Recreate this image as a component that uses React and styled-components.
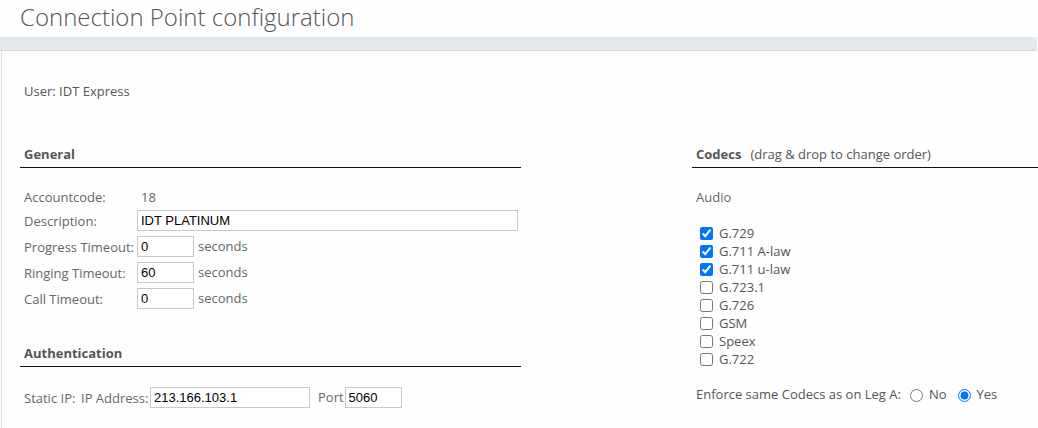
import React from 'react'
import styled, { createGlobalStyle } from 'styled-components';

const GlobalStyle = createGlobalStyle`
    html, body {
        margin: 0;
        padding: 0;
        background: #fefefe;
    }
    body {
        font-family: 'Open Sans', 'Liberation Sans', sans-serif;
        font-size: 13px;
        color: #666;
    }
`;

const Page = styled.div`
    width: 1038px;
    height: 428px;
    overflow: hidden;
    background: #fefefe;
`;

const Title = styled.h1`
    margin: 0;
    height: 37px;
    padding-left: 20px;
    font-size: 24px;
    font-weight: 300;
    line-height: 33px;
    color: #555;
`;

const Band = styled.div`
    height: 13px;
    width: 1037px;
    background: #e4e8eb;
    border-bottom: 1px solid #d6dadd;
`;

const Panel = styled.div`
    margin-left: 1px;
    border-left: 1px solid #dfe2e5;
    padding: 31px 0 0 18px;
    height: 400px;
`;

const UserLine = styled.div`
    padding-left: 4px;
    line-height: 18px;
    color: #555;
`;

const Columns = styled.div`
    display: flex;
    margin-top: 45px;
`;

const LeftCol = styled.div`
    width: 501px;
    flex-shrink: 0;
`;

const RightCol = styled.div`
    margin-left: 171px;
    flex: 1;
`;

const SectionHead = styled.div`
    padding: 0 0 4px 4px;
    line-height: 18px;
    border-bottom: 1px solid #111;
    color: #555;
    b {
        font-weight: 700;
    }
    span {
        margin-left: 9px;
    }
`;

const Spacer = styled.div`
    height: ${props => props.h}px;
`;

const Form = styled.div`
    display: flex;
    flex-direction: column;
    gap: 5px;
    padding-left: 4px;
    margin-top: ${props => props.top}px;
`;

const Row = styled.div`
    display: flex;
    align-items: center;
    height: ${props => props.h || 21}px;
    line-height: 16px;
`;

const Label = styled.div`
    width: ${props => props.w || 113}px;
    flex-shrink: 0;
    white-space: nowrap;
`;

const Value = styled.div`
    padding-left: 4px;
`;

const Input = styled.input`
    box-sizing: border-box;
    height: 21px;
    width: ${props => props.w}px;
    flex-shrink: 0;
    border: 1px solid #c9c9c9;
    padding: 0 3px;
    margin: 0;
    font-family: 'Liberation Sans', Arial, sans-serif;
    font-size: 13px;
    color: #000;
    background: #fff;
    outline: none;
`;

const Unit = styled.span`
    margin-left: ${props => props.ml ?? 4}px;
    margin-right: ${props => props.mr ?? 0}px;
    position: relative;
    top: -1px;
`;

const Audio = styled.div`
    padding-left: 4px;
    margin-top: 20px;
    line-height: 18px;
`;

const CodecList = styled.div`
    margin-top: 18px;
    padding-left: 4px;
    display: flex;
    flex-direction: column;
`;

const Codec = styled.label`
    display: flex;
    align-items: center;
    height: 18px;
    color: #555;
    input {
        width: 13px;
        height: 13px;
        margin: 0 6px 0 4px;
    }
`;

const Enforce = styled.div`
    display: flex;
    align-items: center;
    margin-top: 17px;
    padding-left: 4px;
    height: 18px;
    color: #555;
`;

const Radio = styled.input`
    width: 13px;
    height: 13px;
    margin: 2px 6px 0 ${props => props.ml}px;
`;

const codecs = [
    ['G.729', true],
    ['G.711 A-law', true],
    ['G.711 u-law', true],
    ['G.723.1', false],
    ['G.726', false],
    ['GSM', false],
    ['Speex', false],
    ['G.722', false],
];

export default function App() {
    return (
        <Page>
            <GlobalStyle />
            <Title>Connection Point configuration</Title>
            <Band />
            <Panel>
                <UserLine>User: IDT Express</UserLine>
                <Columns>
                    <LeftCol>
                        <SectionHead><b>General</b></SectionHead>
                        <Form top={21}>
                            <Row h={16}>
                                <Label>Accountcode:</Label>
                                <Value>18</Value>
                            </Row>
                            <Row>
                                <Label>Description:</Label>
                                <Input w={381} defaultValue="IDT PLATINUM" />
                            </Row>
                            <Row>
                                <Label>Progress Timeout:</Label>
                                <Input w={57} defaultValue="0" />
                                <Unit>seconds</Unit>
                            </Row>
                            <Row>
                                <Label>Ringing Timeout:</Label>
                                <Input w={57} defaultValue="60" />
                                <Unit>seconds</Unit>
                            </Row>
                            <Row>
                                <Label>Call Timeout:</Label>
                                <Input w={57} defaultValue="0" />
                                <Unit>seconds</Unit>
                            </Row>
                        </Form>
                        <Spacer h={35} />
                        <SectionHead><b>Authentication</b></SectionHead>
                        <Form top={20}>
                            <Row>
                                <Label w={57}>Static IP:</Label>
                                <Label w={69}>IP Address:</Label>
                                <Input w={160} defaultValue="213.166.103.1" />
                                <Unit ml={8} mr={1}>Port</Unit>
                                <Input w={57} defaultValue="5060" />
                            </Row>
                        </Form>
                    </LeftCol>
                    <RightCol>
                        <SectionHead><b>Codecs</b><span>(drag &amp; drop to change order)</span></SectionHead>
                        <Audio>Audio</Audio>
                        <CodecList>
                            {codecs.map(([name, on]) => (
                                <Codec key={name}>
                                    <input type="checkbox" defaultChecked={on} />
                                    {name}
                                </Codec>
                            ))}
                        </CodecList>
                        <Enforce>
                            Enforce same Codecs as on Leg A:
                            <Radio type="radio" name="enf" ml={9} />
                            No
                            <Radio type="radio" name="enf" ml={11} defaultChecked />
                            Yes
                        </Enforce>
                    </RightCol>
                </Columns>
            </Panel>
        </Page>
    )
}
